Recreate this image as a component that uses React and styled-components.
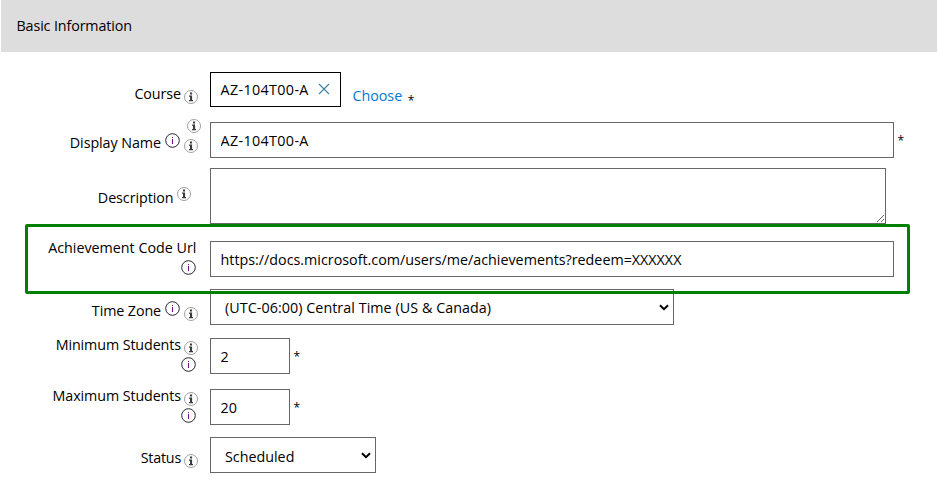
import React from 'react';
import styled, { createGlobalStyle } from 'styled-components';

const GlobalStyle = createGlobalStyle`
  * { box-sizing: border-box; }
  body {
    margin: 0;
    background: #fff;
    color: #000;
    font: 14.3px/20px "Open Sans", "Noto Sans", sans-serif;
    overflow: hidden;
  }
`;

const Page = styled.main`
  width: 937px;
  height: 502px;
`;

const SectionHeader = styled.header`
  height: 52px;
  margin-left: 1px;
  padding: 16px 0 0 15.5px;
  background: #ddd;
  letter-spacing: -0.12px;
`;

const Form = styled.form`
  position: relative;
  padding-top: 20px;
`;

const Row = styled.div`
  display: grid;
  grid-template-columns: 210px 1fr;
  height: ${(p) => p.$height}px;
`;

const LabelCell = styled.div`
  display: flex;
  flex-direction: column;
  align-items: flex-end;
  margin-top: ${(p) => p.$top || 0}px;
`;

const LabelLine = styled.div`
  display: flex;
  align-items: flex-start;
  height: ${(p) => p.$height || 20}px;
  padding-right: ${(p) => (p.$end === undefined ? 12 : p.$end)}px;
`;

const LabelText = styled.label`
  white-space: nowrap;
  letter-spacing: ${(p) => p.$track || 0}px;
`;

const IconSlot = styled.svg`
  flex: none;
  width: ${(p) => p.$size}px;
  height: ${(p) => p.$size}px;
  margin: ${(p) => p.$drop || 0}px 0 0 ${(p) => (p.$gap === undefined ? 3 : p.$gap)}px;
`;

const FieldCell = styled.div`
  display: flex;
  align-items: flex-start;
  padding-top: ${(p) => p.$top || 0}px;
`;

const TextInput = styled.input`
  width: ${(p) => p.$width}px;
  height: 36px;
  padding: 0 10px 0 9.6px;
  border: 1px solid #666;
  border-radius: 0;
  background: #fff;
  color: #000;
  font: inherit;
  letter-spacing: ${(p) => p.$track || 0}px;
  outline: none;
`;

const TextArea = styled.textarea`
  width: 676px;
  height: 56px;
  border: 1px solid #666;
  background: #fff;
  font: inherit;
  resize: both;
  outline: none;
`;

const Tag = styled.div`
  display: flex;
  width: 131px;
  height: 35px;
  padding: 7px 0 0 9.6px;
  border: 1px solid #000;
  letter-spacing: 0.36px;
  white-space: nowrap;
`;

const RemoveIcon = styled.svg`
  width: 12px;
  height: 12px;
  margin: 3px 0 0 9px;
`;

const ChooseLink = styled.a`
  margin: 14px 0 0 11.4px;
  color: #0078d4;
`;

const Required = styled.span`
  margin: ${(p) => p.$drop}px 0 0 ${(p) => p.$gap || 3.4}px;
  font-size: 12px;
  line-height: 16px;
`;

const SelectBox = styled.div`
  display: grid;
  width: ${(p) => p.$width}px;
  height: 36px;
`;

const Select = styled.select`
  grid-area: 1 / 1;
  appearance: none;
  height: 36px;
  padding: ${(p) => p.$drop || 0}px 24px 0 14px;
  border: 1px solid #666;
  border-radius: 0;
  background: #fff;
  color: #000;
  font: inherit;
  letter-spacing: ${(p) => p.$track || 0}px;
  outline: none;
`;

const Chevron = styled.svg`
  grid-area: 1 / 1;
  justify-self: end;
  width: 10px;
  height: 7px;
  margin: 15px 5px 0 0;
  pointer-events: none;
`;

const Highlight = styled.div`
  position: absolute;
  left: 25px;
  top: 172px;
  width: 885px;
  height: 70px;
  border: 3px solid #008000;
  border-radius: 2px;
  pointer-events: none;
`;

const HelpIcon = (props) => (
  <IconSlot $size={14} viewBox="0 0 14 14" {...props}>
    <circle cx="7" cy="7" r="6.5" fill="#fff" stroke="#a0a0a0" strokeWidth="1" />
    <path d="M6 2.6h2.1v2H6zM5 5.6h3.1v4.5H9v1.1H5v-1.1h1V6.7H5z" fill="#3a3a3a" />
  </IconSlot>
);

const InfoIcon = (props) => (
  <IconSlot $size={15} viewBox="0 0 15 15" {...props}>
    <circle cx="7.5" cy="7.5" r="6.8" fill="#fff" stroke="#26263a" strokeWidth="1" />
    <path d="M7 4h1v1.1H7zM7 6h1v5H7z" fill="#70108a" />
  </IconSlot>
);

const Dropdown = ({ width, value, track, drop }) => (
  <SelectBox $width={width}>
    <Select $track={track} $drop={drop} defaultValue={value}>
      <option>{value}</option>
    </Select>
    <Chevron viewBox="0 0 10 7">
      <path d="M1 1.3 5 5.2 9 1.3" fill="none" stroke="#000" strokeWidth="2" />
    </Chevron>
  </SelectBox>
);

export default function App() {
  return (
    <Page>
      <GlobalStyle />
      <SectionHeader>Basic Information</SectionHeader>
      <Form>
        <Row $height={47}>
          <LabelCell $top={12}>
            <LabelLine>
              <LabelText $track={-0.08}>Course</LabelText>
              <HelpIcon $drop={6} />
            </LabelLine>
          </LabelCell>
          <FieldCell>
            <Tag>
              AZ-104T00-A
              <RemoveIcon viewBox="0 0 12 12">
                <path d="M1 1l10 10M11 1 1 11" stroke="#3a7fa6" strokeWidth="1.1" />
              </RemoveIcon>
            </Tag>
            <ChooseLink>Choose</ChooseLink>
            <Required $drop={21} $gap={5.6}>*</Required>
          </FieldCell>
        </Row>
        <Row $height={49}>
          <LabelCell>
            <LabelLine $end={9} $height={14}>
              <HelpIcon />
            </LabelLine>
            <LabelLine>
              <LabelText $track={-0.06}>Display Name</LabelText>
              <InfoIcon $gap={4} />
              <HelpIcon $drop={6} $gap={4} />
            </LabelLine>
          </LabelCell>
          <FieldCell $top={3}>
            <TextInput $width={684} $track={0.36} defaultValue="AZ-104T00-A" />
            <Required $drop={11}>*</Required>
          </FieldCell>
        </Row>
        <Row $height={56}>
          <LabelCell $top={20}>
            <LabelLine $end={19}>
              <LabelText $track={-0.06}>Description</LabelText>
              <HelpIcon $drop={-1} $gap={3.5} />
            </LabelLine>
          </LabelCell>
          <FieldCell>
            <TextArea />
          </FieldCell>
        </Row>
        <Row $height={65}>
          <LabelCell $top={14}>
            <LabelLine $end={13.6}>
              <LabelText>Achievement Code Url</LabelText>
            </LabelLine>
            <LabelLine $end={14}>
              <InfoIcon $drop={2} />
            </LabelLine>
          </LabelCell>
          <FieldCell $top={17}>
            <TextInput
              $width={684}
              defaultValue="https://docs.microsoft.com/users/me/achievements?redeem=XXXXXX"
            />
          </FieldCell>
        </Row>
        <Row $height={49}>
          <LabelCell $top={12}>
            <LabelLine>
              <LabelText $track={-0.1}>Time Zone</LabelText>
              <InfoIcon $gap={4} />
              <HelpIcon $drop={6} $gap={4} />
            </LabelLine>
          </LabelCell>
          <FieldCell>
            <Dropdown width={464} track={0.06} drop={2} value="(UTC-06:00) Central Time (US &amp; Canada)" />
          </FieldCell>
        </Row>
        <Row $height={51}>
          <LabelCell $top={-3}>
            <LabelLine>
              <LabelText $track={-0.1}>Minimum Students</LabelText>
              <HelpIcon $drop={6} />
            </LabelLine>
            <LabelLine $end={14}>
              <InfoIcon $drop={2} />
            </LabelLine>
          </LabelCell>
          <FieldCell>
            <TextInput $width={80} defaultValue="2" />
            <Required $drop={11}>*</Required>
          </FieldCell>
        </Row>
        <Row $height={48}>
          <LabelCell $top={-3}>
            <LabelLine>
              <LabelText $track={-0.1}>Maximum Students</LabelText>
              <HelpIcon $drop={6} />
            </LabelLine>
            <LabelLine $end={14}>
              <InfoIcon $drop={2} />
            </LabelLine>
          </LabelCell>
          <FieldCell>
            <TextInput $width={80} defaultValue="20" />
            <Required $drop={11}>*</Required>
          </FieldCell>
        </Row>
        <Row $height={36}>
          <LabelCell $top={11}>
            <LabelLine>
              <LabelText $track={-0.2}>Status</LabelText>
              <HelpIcon $drop={6} />
            </LabelLine>
          </LabelCell>
          <FieldCell>
            <Dropdown width={166} drop={4} value="Scheduled" />
          </FieldCell>
        </Row>
        <Highlight />
      </Form>
    </Page>
  );
}
